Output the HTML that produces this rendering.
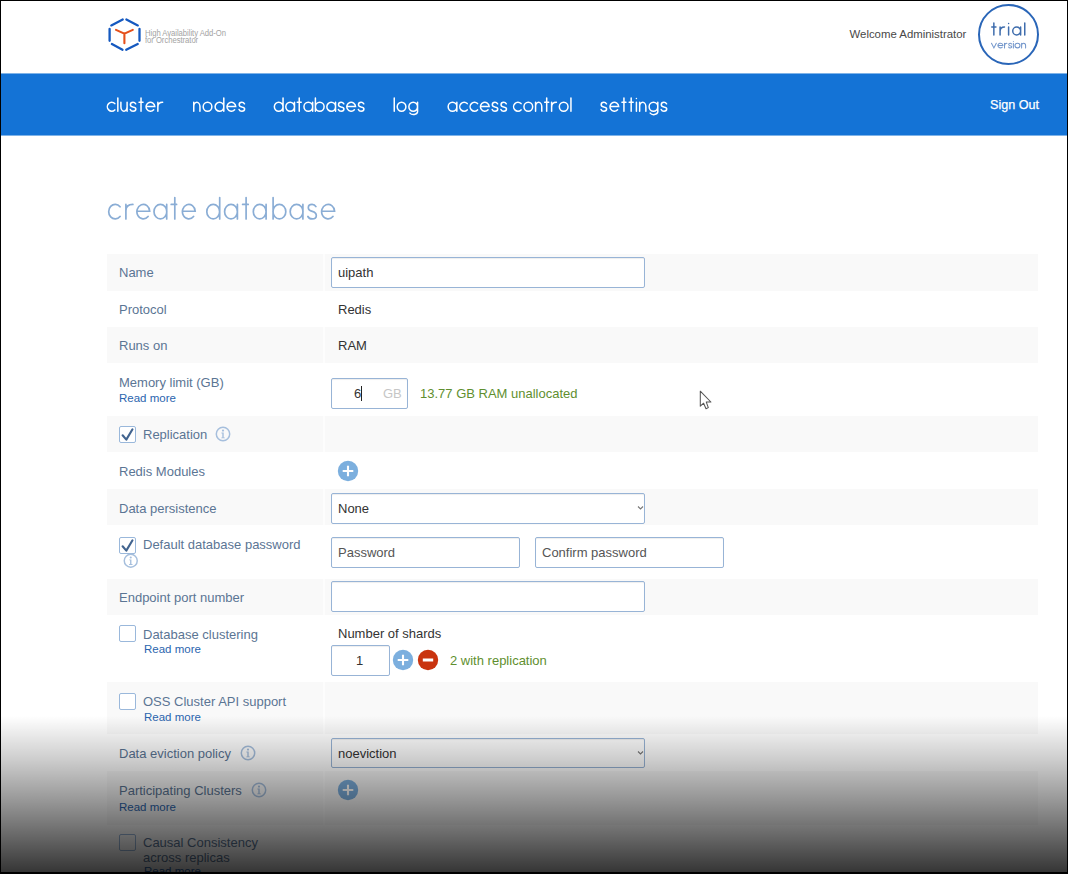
<!DOCTYPE html>
<html><head><meta charset="utf-8">
<style>
*{box-sizing:border-box;margin:0;padding:0}
html,body{width:1068px;height:874px;overflow:hidden;background:#fff;font-family:"Liberation Sans",sans-serif;position:relative}
.a{position:absolute;white-space:nowrap}
.bt{position:absolute;background:#000}
.nav{position:absolute;left:1px;top:73px;width:1066px;height:63px;background:#1473d6;border-top:1px solid #7fb3e8;border-bottom:1px solid #7fb3e8}
.nv{position:absolute;top:95px;color:#fff;font-size:18px;line-height:20px;letter-spacing:0.9px}
.row{position:absolute;left:107px;width:931px}
.g .lc{background:#f9f9f9}
.g .vc{background:#f9f9f9}
.g{background:#fdfdfd}
.lc{position:absolute;left:0;top:0;bottom:0;width:216px}
.vc{position:absolute;left:218px;top:0;bottom:0;right:0}
.lb{position:absolute;color:#5b7594;font-size:13px;line-height:15px}
.rm{position:absolute;color:#2b65ae;font-size:11.5px;line-height:13px}
.inp{position:absolute;border:1px solid #98b4d6;border-radius:2px;background:#fff;box-shadow:inset 0 1px 1px rgba(0,0,0,0.07)}
.tx{position:absolute;color:#333;font-size:13px;line-height:15px}
.ph{position:absolute;color:#555;font-size:13px;line-height:15px}
.grn{position:absolute;color:#5f8f2f;font-size:13px;line-height:15px}
.cb{position:absolute;width:17px;height:17px;border:1px solid #9ab8db;border-radius:2px;background:#fff}
</style></head><body>

<!-- header -->
<svg class="a" style="left:0;top:0" width="150" height="60" viewBox="0 0 150 60">
  <g stroke="#1559c0" stroke-width="2.3" fill="none" stroke-linecap="round">
    <path d="M111.3 25.4L122.7 19.5M126.4 19.5L137.8 25.4M109.6 29V40.8M139.5 29V40.8M111.9 44L122.5 49.8M126.2 49.8L137.7 44"/>
  </g>
  <g stroke="#e5501b" stroke-width="2.1" fill="none" stroke-linecap="round">
    <path d="M116 29.9L124.4 33.6L132.8 29.9M124.4 33.4V43.2"/>
  </g>
</svg>
<div class="a" style="left:145px;top:29.5px;color:#a3a3a3;font-size:8.5px;line-height:7.5px;letter-spacing:-0.05px;transform:scaleX(0.905);transform-origin:0 0">High Availability Add-On<br>for Orchestrator</div>

<div class="a" style="left:849.5px;top:27px;color:#484848;font-size:11.4px;line-height:14px">Welcome Administrator</div>
<div class="a" style="left:978px;top:4px;width:61px;height:61px;border:2px solid #2a66b8;border-radius:50%"></div>


<div class="nav"></div>
<!--NAV--><svg class="a" style="left:0;top:0" width="700" height="130" viewBox="0 0 700 130"><path d="M114.78 103.60A4.35 4.45 0 1 0 114.78 109.90M117.84 98.00V111.20M120.90 102.30V106.75A3.10 4.45 0 0 0 127.10 106.75M127.10 102.30V111.20M135.67 103.81C135.09 102.75 134.11 102.30 133.06 102.30C131.44 102.30 130.39 103.37 130.39 104.70C130.39 106.31 131.61 106.66 133.06 107.02C134.69 107.37 135.85 107.91 135.85 109.06C135.85 110.49 134.69 111.20 133.06 111.20C131.79 111.20 130.74 110.58 130.28 109.42M141.03 98.00V111.20M139.03 102.30H143.03M146.09 106.53H154.79A4.35 4.45 0 1 0 153.67 109.73M157.85 102.30V111.20M157.85 107.19C157.85 103.86 159.53 102.30 162.65 102.30M193.75 102.30V111.20M193.75 111.20V106.75A3.10 4.45 0 0 1 199.95 106.75V111.20M211.88 106.75A4.35 4.45 0 1 0 203.18 106.75A4.35 4.45 0 1 0 211.88 106.75M223.80 106.75A4.35 4.45 0 1 0 215.10 106.75A4.35 4.45 0 1 0 223.80 106.75M223.80 98.00V111.20M227.03 106.53H235.73A4.35 4.45 0 1 0 234.61 109.73M244.46 103.81C243.88 102.75 242.89 102.30 241.85 102.30C240.23 102.30 239.18 103.37 239.18 104.70C239.18 106.31 240.40 106.66 241.85 107.02C243.47 107.37 244.63 107.91 244.63 109.06C244.63 110.49 243.47 111.20 241.85 111.20C240.57 111.20 239.53 110.58 239.07 109.42M283.05 106.75A4.35 4.45 0 1 0 274.35 106.75A4.35 4.45 0 1 0 283.05 106.75M283.05 98.00V111.20M294.49 106.75A4.35 4.45 0 1 0 285.79 106.75A4.35 4.45 0 1 0 294.49 106.75M294.49 102.30V111.20M299.23 98.00V111.20M297.23 102.30H301.23M312.66 106.75A4.35 4.45 0 1 0 303.96 106.75A4.35 4.45 0 1 0 312.66 106.75M312.66 102.30V111.20M315.40 98.00V111.20M324.10 106.75A4.35 4.45 0 1 0 315.40 106.75A4.35 4.45 0 1 0 324.10 106.75M335.54 106.75A4.35 4.45 0 1 0 326.84 106.75A4.35 4.45 0 1 0 335.54 106.75M335.54 102.30V111.20M343.79 103.81C343.21 102.75 342.22 102.30 341.18 102.30C339.55 102.30 338.51 103.37 338.51 104.70C338.51 106.31 339.73 106.66 341.18 107.02C342.80 107.37 343.96 107.91 343.96 109.06C343.96 110.49 342.80 111.20 341.18 111.20C339.90 111.20 338.86 110.58 338.39 109.42M346.81 106.53H355.51A4.35 4.45 0 1 0 354.40 109.73M363.76 103.81C363.18 102.75 362.19 102.30 361.15 102.30C359.53 102.30 358.48 103.37 358.48 104.70C358.48 106.31 359.70 106.66 361.15 107.02C362.77 107.37 363.93 107.91 363.93 109.06C363.93 110.49 362.77 111.20 361.15 111.20C359.87 111.20 358.83 110.58 358.37 109.42M394.25 98.00V111.20M405.90 106.75A4.35 4.45 0 1 0 397.20 106.75A4.35 4.45 0 1 0 405.90 106.75M417.55 106.75A4.35 4.45 0 1 0 408.85 106.75A4.35 4.45 0 1 0 417.55 106.75M417.55 102.30V111.90A4.13 3.10 0 0 1 409.95 113.14M456.85 106.75A4.35 4.45 0 1 0 448.15 106.75A4.35 4.45 0 1 0 456.85 106.75M456.85 102.30V111.20M467.20 103.60A4.35 4.45 0 1 0 467.20 109.90M477.54 103.60A4.35 4.45 0 1 0 477.54 109.90M480.46 106.53H489.16A4.35 4.45 0 1 0 488.05 109.73M497.59 103.81C497.01 102.75 496.03 102.30 494.98 102.30C493.36 102.30 492.31 103.37 492.31 104.70C492.31 106.31 493.53 106.66 494.98 107.02C496.61 107.37 497.77 107.91 497.77 109.06C497.77 110.49 496.61 111.20 494.98 111.20C493.71 111.20 492.66 110.58 492.20 109.42M506.31 103.81C505.73 102.75 504.75 102.30 503.70 102.30C502.08 102.30 501.03 103.37 501.03 104.70C501.03 106.31 502.25 106.66 503.70 107.02C505.33 107.37 506.49 107.91 506.49 109.06C506.49 110.49 505.33 111.20 503.70 111.20C502.43 111.20 501.38 110.58 500.92 109.42M521.03 103.60A4.35 4.45 0 1 0 521.03 109.90M532.65 106.75A4.35 4.45 0 1 0 523.95 106.75A4.35 4.45 0 1 0 532.65 106.75M535.57 102.30V111.20M535.57 111.20V106.75A3.10 4.45 0 0 1 541.77 106.75V111.20M546.69 98.00V111.20M544.69 102.30H548.69M551.61 102.30V111.20M551.61 107.19C551.61 103.86 553.29 102.30 556.41 102.30M568.03 106.75A4.35 4.45 0 1 0 559.33 106.75A4.35 4.45 0 1 0 568.03 106.75M570.95 98.00V111.20M606.46 103.81C605.88 102.75 604.89 102.30 603.85 102.30C602.23 102.30 601.18 103.37 601.18 104.70C601.18 106.31 602.40 106.66 603.85 107.02C605.47 107.37 606.63 107.91 606.63 109.06C606.63 110.49 605.47 111.20 603.85 111.20C602.57 111.20 601.53 110.58 601.07 109.42M609.99 106.53H618.69A4.35 4.45 0 1 0 617.58 109.73M623.94 98.00V111.20M621.94 102.30H625.94M631.18 98.00V111.20M629.18 102.30H633.18M636.42 102.30V111.20M636.42 98.60V98.61M639.66 102.30V111.20M639.66 111.20V106.75A3.10 4.45 0 0 1 645.86 106.75V111.20M657.81 106.75A4.35 4.45 0 1 0 649.11 106.75A4.35 4.45 0 1 0 657.81 106.75M657.81 102.30V111.90A4.13 3.10 0 0 1 650.20 113.14M666.56 103.81C665.98 102.75 664.99 102.30 663.95 102.30C662.33 102.30 661.28 103.37 661.28 104.70C661.28 106.31 662.50 106.66 663.95 107.02C665.57 107.37 666.73 107.91 666.73 109.06C666.73 110.49 665.57 111.20 663.95 111.20C662.67 111.20 661.63 110.58 661.17 109.42" stroke="#fff" stroke-width="1.5" fill="none" stroke-linecap="round"/></svg>
<svg class="a" style="left:0;top:0" width="1068" height="60" viewBox="0 0 1068 60"><path d="M993.85 22.90V34.90M991.75 27.00H995.95M1000.08 27.00V34.90M1000.08 31.34C1000.08 28.38 1001.62 27.00 1004.48 27.00M1008.60 27.00V34.90M1008.60 23.50V23.51M1020.63 30.95A3.95 3.95 0 1 0 1012.73 30.95A3.95 3.95 0 1 0 1020.63 30.95M1020.62 27.00V34.90M1024.75 22.90V34.90" stroke="#3f6dad" stroke-width="1.5" fill="none" stroke-linecap="round"/><path d="M991.50 43.20L993.90 47.90L996.30 43.20M997.92 45.43H1002.92A2.50 2.35 0 1 0 1002.27 47.12M1004.53 43.20V47.90M1004.53 45.78C1004.53 44.02 1005.37 43.20 1006.93 43.20M1011.59 44.00C1011.27 43.44 1010.73 43.20 1010.15 43.20C1009.25 43.20 1008.68 43.76 1008.68 44.47C1008.68 45.31 1009.35 45.50 1010.15 45.69C1011.05 45.88 1011.69 46.16 1011.69 46.77C1011.69 47.52 1011.05 47.90 1010.15 47.90C1009.45 47.90 1008.87 47.57 1008.61 46.96M1013.37 43.20V47.90M1013.37 41.50V41.51M1019.98 45.55A2.50 2.35 0 1 0 1014.98 45.55A2.50 2.35 0 1 0 1019.98 45.55M1021.60 43.20V47.90M1021.60 47.90V45.55A2.00 2.35 0 0 1 1025.60 45.55V47.90" stroke="#7598cc" stroke-width="1.05" fill="none" stroke-linecap="round"/></svg><!--/NAV-->
<div class="a" style="left:990px;top:97.5px;color:#fff;font-size:12.6px;line-height:15px;-webkit-text-stroke:0.25px #fff">Sign Out</div>

<svg class="a" style="left:0;top:0" width="400" height="240" viewBox="0 0 400 240"><path d="M120.03 206.80 A6.5 7.25 0 1 0 120.03 216.50 M125.9 204.4 V218.9 M125.9 210.8 C125.9 206.6 128.4 204.4 132.9 204.4 M136.90 211.25 H149.70 A6.4 7.25 0 1 0 148.06 216.50 M166.80 211.65 A6.4 7.25 0 1 0 154.00 211.65 A6.4 7.25 0 1 0 166.80 211.65 M166.7 204.4 V218.9 M174.8 197.6 V218.9 M171.2 204.4 H176.6 M182.40 211.25 H195.20 A6.4 7.25 0 1 0 193.56 216.50 M219.60 211.65 A6.4 7.25 0 1 0 206.80 211.65 A6.4 7.25 0 1 0 219.60 211.65 M219.7 197.6 V218.9 M237.40 211.65 A6.4 7.25 0 1 0 224.60 211.65 A6.4 7.25 0 1 0 237.40 211.65 M237.4 204.4 V218.9 M246.1 197.6 V218.9 M242.6 204.4 H248.2 M266.10 211.65 A6.4 7.25 0 1 0 253.30 211.65 A6.4 7.25 0 1 0 266.10 211.65 M266.1 204.4 V218.9 M273.1 197.6 V218.9 M285.80 211.65 A6.4 7.25 0 1 0 273.00 211.65 A6.4 7.25 0 1 0 285.80 211.65 M303.00 211.65 A6.4 7.25 0 1 0 290.20 211.65 A6.4 7.25 0 1 0 303.00 211.65 M302.9 204.4 V218.9 M315.9 206.6 C315.0 205.0 313.6 204.4 312.1 204.4 C309.8 204.4 308.3 205.7 308.3 207.7 C308.3 209.9 310.4 210.8 312.3 211.4 C314.5 212.1 316.3 213.1 316.3 215.4 C316.3 217.6 314.6 218.9 312.2 218.9 C310.3 218.9 308.7 218.1 307.9 216.5 M321.60 211.25 H334.60 A6.5 7.25 0 1 0 332.93 216.50 " stroke="#8aadd5" stroke-width="1.7" fill="none" stroke-linecap="round"/></svg>

<!-- rows -->
<div class="row g" style="top:254px;height:37px"><div class="lc"></div><div class="vc"></div></div>
<div class="row g" style="top:327px;height:36px"><div class="lc"></div><div class="vc"></div></div>
<div class="row g" style="top:416px;height:36px"><div class="lc"></div><div class="vc"></div></div>
<div class="row g" style="top:489px;height:36px"><div class="lc"></div><div class="vc"></div></div>
<div class="row g" style="top:579px;height:36px"><div class="lc"></div><div class="vc"></div></div>
<div class="row g" style="top:682px;height:52px"><div class="lc"></div><div class="vc"></div></div>
<div class="row g" style="top:771px;height:54px"><div class="lc"></div><div class="vc"></div></div>


<!-- labels -->
<div class="lb" style="left:119px;top:265px">Name</div>
<div class="lb" style="left:119px;top:302px">Protocol</div>
<div class="lb" style="left:119px;top:338px">Runs on</div>
<div class="lb" style="left:119px;top:375px">Memory limit (GB)</div>
<div class="rm" style="left:119px;top:392px">Read more</div>
<div class="cb" style="left:119px;top:426px"></div>
<svg class="a" style="left:119px;top:426px" width="17" height="17" viewBox="0 0 17 17"><path d="M3.6 9.3 L7.3 13.6 L13.5 3.3" stroke="#42648f" stroke-width="2.1" fill="none" stroke-linejoin="round" stroke-linecap="round"/></svg>
<div class="lb" style="left:143px;top:427px">Replication</div>
<svg class="a" style="left:215px;top:426px" width="16" height="16" viewBox="0 0 16 16"><circle cx="8" cy="8" r="6.7" stroke="#a6bfdd" stroke-width="1.5" fill="none"/><path d="M6.4 6.6H8.7V11.4H9.8V12.3H6.3V11.4H7.3V7.5H6.4Z" fill="#a6bfdd"/><circle cx="8" cy="4.6" r="1.1" fill="#a6bfdd"/></svg>
<div class="lb" style="left:119px;top:464px">Redis Modules</div>
<div class="lb" style="left:119px;top:501px">Data persistence</div>
<div class="cb" style="left:119px;top:536.5px"></div>
<svg class="a" style="left:119px;top:536.5px" width="17" height="17" viewBox="0 0 17 17"><path d="M3.6 9.3 L7.3 13.6 L13.5 3.3" stroke="#42648f" stroke-width="2.1" fill="none" stroke-linejoin="round" stroke-linecap="round"/></svg>
<div class="lb" style="left:143px;top:537px">Default database password</div>
<svg class="a" style="left:123.2px;top:552.7px" width="15.5" height="15.5" viewBox="0 0 16 16"><circle cx="8" cy="8" r="6.7" stroke="#a6bfdd" stroke-width="1.5" fill="none"/><path d="M6.4 6.6H8.7V11.4H9.8V12.3H6.3V11.4H7.3V7.5H6.4Z" fill="#a6bfdd"/><circle cx="8" cy="4.6" r="1.1" fill="#a6bfdd"/></svg>
<div class="lb" style="left:119px;top:590px">Endpoint port number</div>
<div class="cb" style="left:119px;top:625px"></div>
<div class="lb" style="left:143px;top:627px">Database clustering</div>
<div class="rm" style="left:144px;top:643px">Read more</div>
<div class="cb" style="left:119px;top:693px"></div>
<div class="lb" style="left:143px;top:694px">OSS Cluster API support</div>
<div class="rm" style="left:144px;top:711px">Read more</div>
<div class="lb" style="left:119px;top:746px">Data eviction policy</div>
<svg class="a" style="left:240px;top:745px" width="16" height="16" viewBox="0 0 16 16"><circle cx="8" cy="8" r="6.7" stroke="#a6bfdd" stroke-width="1.5" fill="none"/><path d="M6.4 6.6H8.7V11.4H9.8V12.3H6.3V11.4H7.3V7.5H6.4Z" fill="#a6bfdd"/><circle cx="8" cy="4.6" r="1.1" fill="#a6bfdd"/></svg>
<div class="lb" style="left:119px;top:783px">Participating Clusters</div>
<svg class="a" style="left:251px;top:782px" width="16" height="16" viewBox="0 0 16 16"><circle cx="8" cy="8" r="6.7" stroke="#a6bfdd" stroke-width="1.5" fill="none"/><path d="M6.4 6.6H8.7V11.4H9.8V12.3H6.3V11.4H7.3V7.5H6.4Z" fill="#a6bfdd"/><circle cx="8" cy="4.6" r="1.1" fill="#a6bfdd"/></svg>
<div class="rm" style="left:119px;top:800.5px">Read more</div>
<div class="cb" style="left:119px;top:834px"></div>
<div class="lb" style="left:143px;top:835px">Causal Consistency</div>
<div class="lb" style="left:143px;top:850px">across replicas</div>
<div class="rm" style="left:144px;top:865px">Read more</div>

<!-- values -->
<div class="inp" style="left:331px;top:257px;width:314px;height:31px"></div>
<div class="tx" style="left:338px;top:265px">uipath</div>
<div class="tx" style="left:338px;top:302px">Redis</div>
<div class="tx" style="left:338px;top:338px">RAM</div>
<div class="inp" style="left:331px;top:378px;width:77px;height:31px"></div>
<div class="tx" style="left:354px;top:386px">6</div>
<div class="a" style="left:361px;top:386px;width:1px;height:15px;background:#222"></div>
<div class="a" style="left:383px;top:386px;color:#c6c6c6;font-size:13px;line-height:15px">GB</div>
<div class="grn" style="left:420px;top:386px">13.77 GB RAM unallocated</div>
<svg class="a" style="left:337px;top:460px" width="22" height="22" viewBox="0 0 22 22"><circle cx="11" cy="11" r="10.2" fill="#7cafde"/><path d="M11 5.7V16.3M5.7 11H16.3" stroke="#fff" stroke-width="2.1"/></svg>
<div class="inp" style="left:331px;top:493px;width:314px;height:31px"></div>
<div class="tx" style="left:338px;top:501px">None</div>
<svg class="a" style="left:637px;top:505px" width="7" height="6" viewBox="0 0 7 6"><path d="M1 1.5L3.5 4L6 1.5" stroke="#777" stroke-width="1.1" fill="none"/></svg>
<div class="inp" style="left:331px;top:537px;width:189px;height:31px"></div>
<div class="ph" style="left:338px;top:545px">Password</div>
<div class="inp" style="left:535px;top:537px;width:189px;height:31px"></div>
<div class="ph" style="left:542px;top:545px">Confirm password</div>
<div class="inp" style="left:331px;top:581px;width:314px;height:31px"></div>
<div class="tx" style="left:338px;top:626px">Number of shards</div>
<div class="inp" style="left:331px;top:645px;width:59px;height:31px"></div>
<div class="tx" style="left:356px;top:653px">1</div>
<svg class="a" style="left:392px;top:649px" width="22" height="22" viewBox="0 0 22 22"><circle cx="11" cy="11" r="10.2" fill="#7cafde"/><path d="M11 5.7V16.3M5.7 11H16.3" stroke="#fff" stroke-width="2.1"/></svg>
<svg class="a" style="left:417px;top:649px" width="22" height="22" viewBox="0 0 22 22"><circle cx="11" cy="11" r="10.2" fill="#c9340f"/><path d="M5.8 11H16.2" stroke="#fff" stroke-width="3"/></svg>
<div class="grn" style="left:450px;top:653px">2 with replication</div>
<div class="inp" style="left:331px;top:738px;width:314px;height:30px"></div>
<div class="tx" style="left:338px;top:746px">noeviction</div>
<svg class="a" style="left:637px;top:750px" width="7" height="6" viewBox="0 0 7 6"><path d="M1 1.5L3.5 4L6 1.5" stroke="#777" stroke-width="1.1" fill="none"/></svg>
<svg class="a" style="left:337px;top:779px" width="22" height="22" viewBox="0 0 22 22"><circle cx="11" cy="11" r="10.2" fill="#7cafde"/><path d="M11 5.7V16.3M5.7 11H16.3" stroke="#fff" stroke-width="2.1"/></svg>

<!-- mouse cursor -->
<svg class="a" style="left:698px;top:389px" width="16" height="22" viewBox="0 0 16 22"><path d="M2.3 2.2 L2.3 17.2 L5.6 14.2 L8.0 19.8 L10.3 18.6 L8.3 13.1 L12.9 13.0 Z" fill="#fff" stroke="#555" stroke-width="1.05" stroke-linejoin="round"/></svg>

<!-- bottom gradient overlay -->
<div class="a" style="left:0;top:716px;width:1068px;height:158px;background:linear-gradient(to bottom,rgba(0,0,0,0) 0%,rgba(0,0,0,0.2) 28%,rgba(0,0,0,0.42) 55%,rgba(0,0,0,0.61) 78%,rgba(0,0,0,0.8) 100%)"></div>

<!-- borders -->
<div class="bt" style="left:0;top:0;width:1068px;height:1px"></div>
<div class="bt" style="left:0;top:0;width:1px;height:874px"></div>
<div class="bt" style="left:1067px;top:0;width:1px;height:874px"></div>
<div class="bt" style="left:0;top:872px;width:1068px;height:2px"></div>
</body></html>
